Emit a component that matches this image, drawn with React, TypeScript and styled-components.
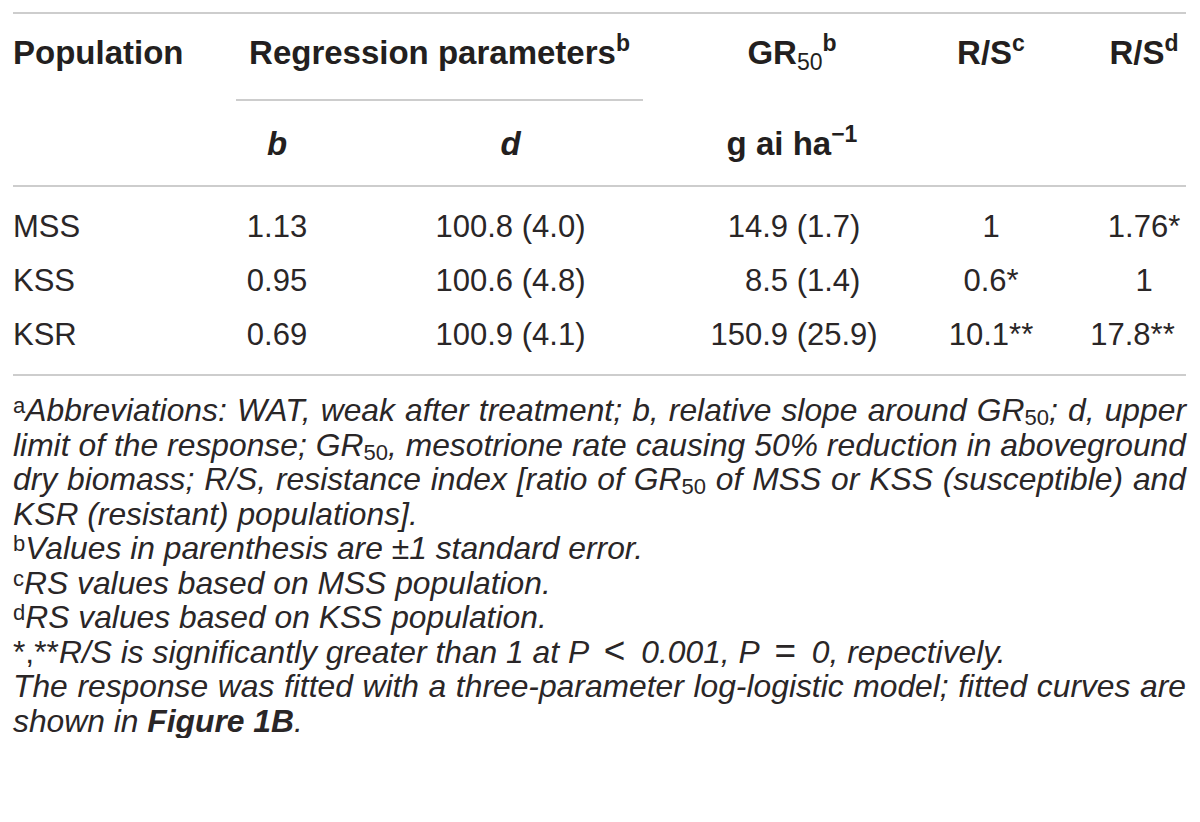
import styled, { createGlobalStyle } from 'styled-components';

const COLUMNS = '223px 82px 325px 298px 100px 145px';
const RULE = '#cdcdcd';

const GlobalStyle = createGlobalStyle`
  body {
    margin: 0;
    background: #fff;
    color: #231f20;
    font-family: "Liberation Sans", Arial, Helvetica, sans-serif;
  }
`;

const Page = styled.div`
  width: 1173px;
  padding: 12px 14px 0 13px;
`;

const Rule = styled.div`
  height: 2px;
  background: ${RULE};
`;

const HeadGrid = styled.div`
  display: grid;
  grid-template-columns: ${COLUMNS};
  font-size: 33px;
  line-height: 33px;
  font-weight: 700;
`;

const HeadCell = styled.div<{ $row: 1 | 2; $span?: number; $align?: 'left' | 'center'; $pad?: number; $ruled?: boolean }>`
  grid-column: span ${(p) => p.$span ?? 1};
  padding: ${(p) => (p.$row === 1 ? '22px 0 30px' : '26px 0 25px')};
  padding-left: ${(p) => p.$pad ?? 0}px;
  text-align: ${(p) => p.$align ?? 'center'};
  border-bottom: ${(p) => (p.$ruled ? `2px solid ${RULE}` : 'none')};
  white-space: nowrap;
`;

const HeadSup = styled.span`
  font-size: 23px;
  line-height: 0;
  vertical-align: 13px;
`;

const HeadSub = styled.span`
  font-size: 23px;
  font-weight: 400;
  line-height: 0;
  vertical-align: -6px;
`;

const BodyGrid = styled.div`
  display: grid;
  grid-template-columns: ${COLUMNS};
  padding: 13px 0 12px;
  font-size: 31px;
  line-height: 54px;
  color: #2a2627;
`;

const Cell = styled.div<{ $align?: 'left' | 'center'; $pad?: number }>`
  padding-left: ${(p) => p.$pad ?? 0}px;
  text-align: ${(p) => p.$align ?? 'center'};
  white-space: nowrap;
`;

// leading number of the GR50 column, so the decimal points line up
const Lead = styled.span`
  display: inline-block;
  width: 145px;
  text-align: right;
`;

const Notes = styled.div`
  padding-top: 17px;
  font-size: 31.8px;
  line-height: 34.55px;
  font-style: italic;
  color: #2a2627;
`;

const Note = styled.p`
  margin: 0;
  text-align: justify;
`;

const Mark = styled.span`
  font-size: 22px;
  font-style: normal;
  line-height: 0;
  vertical-align: 8px;
`;

const Sub = styled.span`
  font-size: 22px;
  font-style: normal;
  line-height: 0;
  vertical-align: -4px;
`;

const Upright = styled.span`
  font-style: normal;
`;

const MathSign = styled.span`
  font-size: 37px;
  font-style: normal;
  line-height: 0;
  margin: 0 7px;
`;

const Strong = styled.b`
  font-weight: 700;
`;

interface IRow {
  name: string;
  b: string;
  d: string;
  gr: [string, string];
  rsc: string;
  rsd: string;
  rsdPad: number;
}

const ROWS: IRow[] = [
  { name: 'MSS', b: '1.13', d: '100.8 (4.0)', gr: ['14.9', '(1.7)'], rsc: '1', rsd: '1.76*', rsdPad: 61 },
  { name: 'KSS', b: '0.95', d: '100.6 (4.8)', gr: ['8.5', '(1.4)'], rsc: '0.6*', rsd: '1', rsdPad: 61 },
  { name: 'KSR', b: '0.69', d: '100.9 (4.1)', gr: ['150.9', '(25.9)'], rsc: '10.1**', rsd: '17.8**', rsdPad: 38 },
];

const App = () => {
  return (
    <Page>
      <GlobalStyle />
      <Rule />
      <HeadGrid>
        <HeadCell $row={1} $align="left">Population</HeadCell>
        <HeadCell $row={1} $span={2} $ruled>
          Regression parameters<HeadSup>b</HeadSup>
        </HeadCell>
        <HeadCell $row={1}>
          GR<HeadSub>50</HeadSub>
          <HeadSup>b</HeadSup>
        </HeadCell>
        <HeadCell $row={1}>
          R/S<HeadSup>c</HeadSup>
        </HeadCell>
        <HeadCell $row={1} $pad={61}>
          R/S<HeadSup>d</HeadSup>
        </HeadCell>

        <HeadCell $row={2} />
        <HeadCell $row={2}>
          <i>b</i>
        </HeadCell>
        <HeadCell $row={2} $pad={60}>
          <i>d</i>
        </HeadCell>
        <HeadCell $row={2}>
          g ai ha<HeadSup>−1</HeadSup>
        </HeadCell>
        <HeadCell $row={2} />
        <HeadCell $row={2} />
      </HeadGrid>
      <Rule />
      <BodyGrid>
        {ROWS.map((row) => [
          <Cell key={row.name + '-name'} $align="left">{row.name}</Cell>,
          <Cell key={row.name + '-b'}>{row.b}</Cell>,
          <Cell key={row.name + '-d'} $pad={60}>{row.d}</Cell>,
          <Cell key={row.name + '-gr'} $align="left">
            <Lead>{row.gr[0]}</Lead> {row.gr[1]}
          </Cell>,
          <Cell key={row.name + '-rsc'}>{row.rsc}</Cell>,
          <Cell key={row.name + '-rsd'} $pad={row.rsdPad}>{row.rsd}</Cell>,
        ])}
      </BodyGrid>
      <Rule />
      <Notes>
        <Note>
          <Mark>a</Mark>Abbreviations: WAT, weak after treatment; b, relative slope around GR<Sub>50</Sub>; d, upper
          limit of the response; GR<Sub>50</Sub>, mesotrione rate causing 50% reduction in aboveground dry biomass;
          R/S, resistance index [ratio of GR<Sub>50</Sub> of MSS or KSS (susceptible) and KSR (resistant)
          populations].
        </Note>
        <Note>
          <Mark>b</Mark>Values in parenthesis are <Upright>±</Upright>1 standard error.
        </Note>
        <Note>
          <Mark>c</Mark>RS values based on MSS population.
        </Note>
        <Note>
          <Mark>d</Mark>RS values based on KSS population.
        </Note>
        <Note>
          <Upright>*,**</Upright>R/S is significantly greater than 1 at P <MathSign>&lt;</MathSign> 0.001, P{' '}
          <MathSign>=</MathSign> 0, repectively.
        </Note>
        <Note>
          The response was fitted with a three-parameter log-logistic model; fitted curves are shown in{' '}
          <Strong>Figure 1B</Strong>.
        </Note>
      </Notes>
    </Page>
  );
};

export default App;
